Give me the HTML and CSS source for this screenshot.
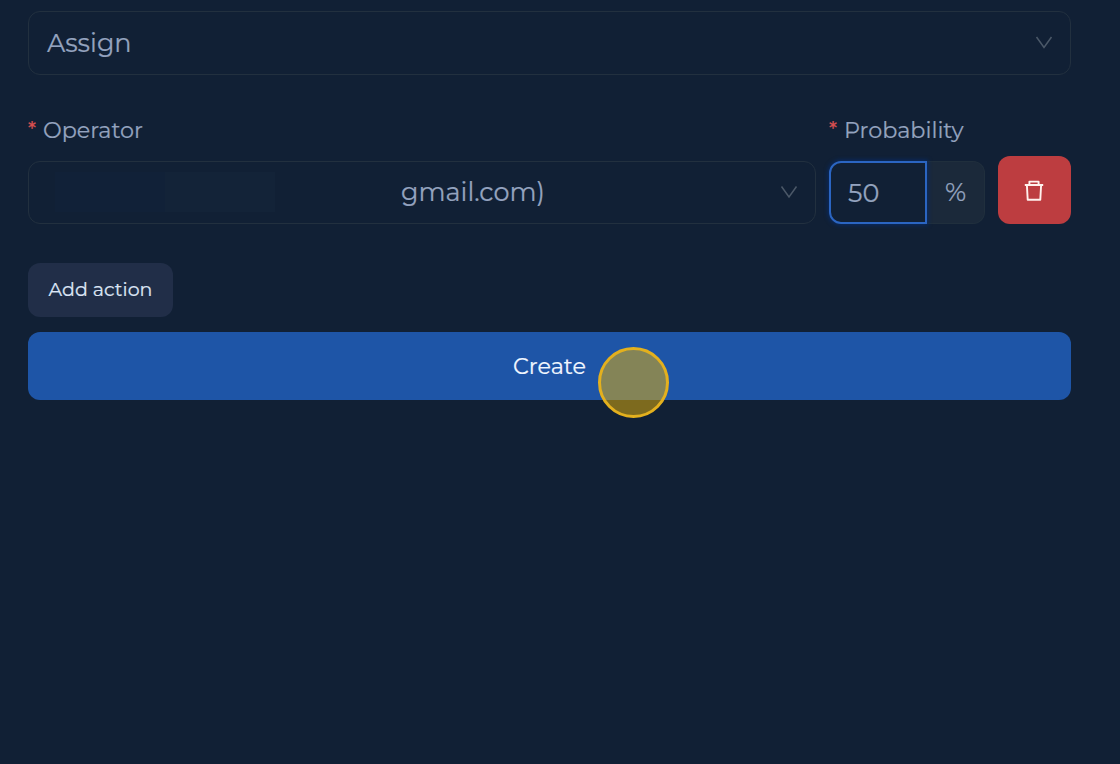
FILE: index.html
```html
<!DOCTYPE html>
<html lang="en">
<head>
<meta charset="utf-8">
<title>Actions</title>
<link rel="stylesheet" href="styles.css">
</head>
<body>
<main class="form">
  <div class="select action">
    <span>Assign</span>
    <svg class="chevron" width="18" height="14" viewBox="0 0 18 14"><path d="M1.5 2 9 12.5 16.5 2"/></svg>
  </div>
  <div class="row">
    <div class="field operator">
      <div class="label"><span class="star">*</span><span>Operator</span></div>
      <div class="select">
        <span class="redacted"><i class="patch-a"></i><i class="patch-b"></i></span>
        <span>gmail.com)</span>
        <svg class="chevron" width="18" height="14" viewBox="0 0 18 14"><path d="M1.5 1.5 9 12 16.5 1.5"/></svg>
      </div>
    </div>
    <div class="field probability">
      <div class="label"><span class="star">*</span><span>Probability</span></div>
      <div class="group">
        <div class="number"><span>50</span></div>
        <div class="addon"><span>%</span></div>
      </div>
    </div>
    <button class="delete" aria-label="Delete">
      <svg width="20" height="22" viewBox="0 0 20 22"><path d="M.8 6H19.2M5.4 5.8V2.6H14.6V5.8M2.9 6.2 3.7 20.8H16.3L17.1 6.2"/></svg>
    </button>
  </div>
  <button class="add"><span>Add action</span></button>
  <button class="create"><span>Create</span><i class="pointer"></i></button>
</main>
</body>
</html>
```

FILE: styles.css
```css
* { box-sizing: border-box; }
body {
  margin: 0;
  height: 764px;
  overflow: hidden;
  background: #112035;
  color: #94a3bf;
  font-family: Montserrat, Inter, sans-serif;
  -webkit-text-stroke: .2px currentColor;
}
button {
  border: 0;
  padding: 0;
  font-family: inherit;
  display: flex;
  align-items: center;
  justify-content: center;
}
.form {
  display: flex;
  flex-direction: column;
  align-items: flex-start;
  padding: 11px 49px 0 28px;
}
.select {
  display: flex;
  align-items: center;
  width: 100%;
  height: 63px;
  padding: 0 17px 2px 18px;
  border: 1.5px solid #22303f;
  border-radius: 12px;
  font-size: 25.5px;
}
.action { height: 64px; }
.chevron {
  margin-left: auto;
  fill: none;
  stroke: #4b5868;
  stroke-width: 1.5;
}
.row {
  display: flex;
  align-items: flex-end;
  width: 100%;
  margin-top: 39px;
}
.operator { width: 788px; }
.probability { width: 156px; margin-left: 13px; }
.label {
  display: flex;
  align-items: center;
  height: 34px;
  margin-bottom: 13px;
  padding-bottom: 2px;
  font-size: 22.3px;
  white-space: nowrap;
}
.star {
  width: 15px;
  padding-bottom: 2px;
  color: #d64f50;
  font-size: 20px;
  font-weight: 500;
}
.redacted {
  width: 354px;
  height: 40px;
  display: flex;
}
.patch-a { width: 110px; margin-left: 8px; background: #112138; }
.patch-b { width: 110px; background: #132338; }
.group { display: flex; height: 63px; }
.number, .addon { display: flex; align-items: center; font-size: 25.5px; }
.number {
  width: 98px;
  padding-left: 17px;
  border: 2px solid #2b65c2;
  border-radius: 12px 0 0 12px;
  box-shadow: 0 0 4px 1px #082b67;
  z-index: 1;
}
.addon {
  width: 58px;
  padding-bottom: 2px;
  justify-content: center;
  background: #1b293a;
  border: 1.5px solid #202f3d;
  border-left: 0;
  border-radius: 0 12px 12px 0;
}
.delete {
  width: 73px;
  height: 68px;
  margin-left: 13px;
  padding-right: 1px;
  border-radius: 12px;
  background: #bd3d40;
}
.delete svg { fill: none; stroke: #fff1ed; stroke-width: 1.9; stroke-linejoin: round; }
.add {
  width: 145px;
  height: 54px;
  margin-top: 39px;
  padding-bottom: 2px;
  border-radius: 12px;
  background: #212e48;
  color: #dce5f5;
  font-size: 19px;
}
.create {
  position: relative;
  width: 100%;
  height: 68px;
  margin-top: 15px;
  border-radius: 12px;
  background: #1e55a7;
  color: #f0f7ff;
  font-size: 22.3px;
}
.pointer {
  position: absolute;
  left: 569.5px;
  top: 14.5px;
  width: 71px;
  height: 71px;
  border: 3px solid #e3b01e;
  border-radius: 50%;
  background: rgba(234, 179, 8, .5);
}
```
